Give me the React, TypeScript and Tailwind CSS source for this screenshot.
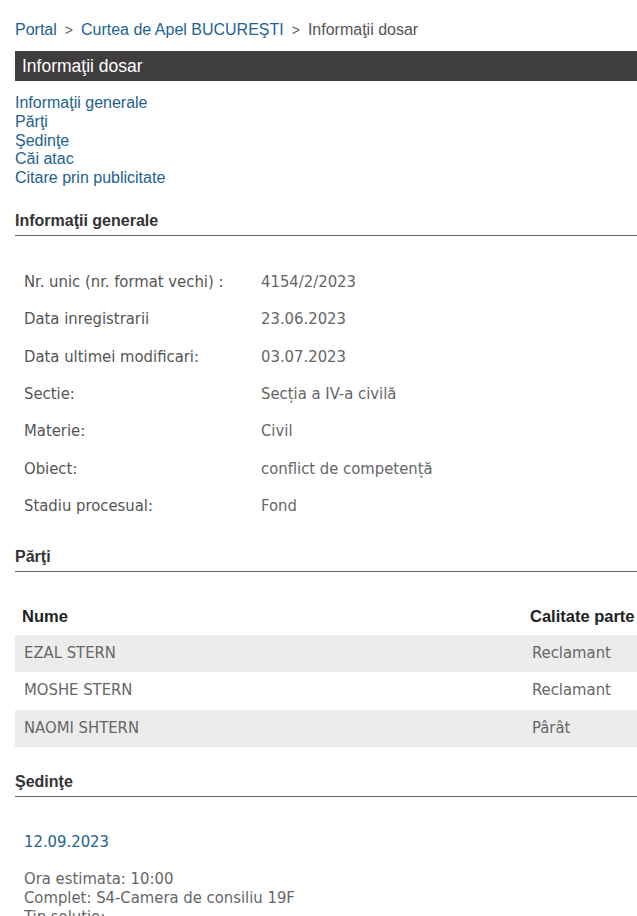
const info: [string, string][] = [
  ["Nr. unic (nr. format vechi) :", "4154/2/2023"],
  ["Data inregistrarii", "23.06.2023"],
  ["Data ultimei modificari:", "03.07.2023"],
  ["Sectie:", "Secția a IV-a civilă"],
  ["Materie:", "Civil"],
  ["Obiect:", "conflict de competență"],
  ["Stadiu procesual:", "Fond"],
];

const parti = [
  { nume: "EZAL STERN", calitate: "Reclamant" },
  { nume: "MOSHE STERN", calitate: "Reclamant" },
  { nume: "NAOMI SHTERN", calitate: "Pârât" },
];

const links = [
  "Informaţii generale",
  "Părţi",
  "Şedinţe",
  "Căi atac",
  "Citare prin publicitate",
];

const arial = "font-['Liberation_Sans',Arial,sans-serif]";
const tahoma = "font-['DejaVu_Sans_Condensed','DejaVu_Sans',sans-serif]";

function SectionTitle({ title }: { title: string }) {
  return (
    <div className={`${arial} text-[16px] font-bold text-[#333] leading-[18px] pb-[5px] border-b border-[#666]`}>
      {title}
    </div>
  );
}

export default function App() {
  return (
    <div className="w-full h-[916px] overflow-hidden bg-white">
      <div className="w-[720px] pl-[15px]">
        {/* ===== BREADCRUMB ===== */}
        <div className={`${arial} text-[16px] leading-[18px] pt-[21px] text-[#555]`}>
          <span className="text-[#23628f]">Portal</span>
          <span className="mx-[8px] text-[#666] text-[14px]">&gt;</span>
          <span className="text-[#23628f]">Curtea de Apel BUCUREŞTI</span>
          <span className="mx-[8px] text-[#666] text-[14px]">&gt;</span>
          <span>Informaţii dosar</span>
        </div>

        {/* ===== TITLE BAR ===== */}
        <div className={`${arial} mt-[12px] h-[30px] bg-[#3f3d3d] text-white text-[17.5px] leading-[30px] pl-[7px]`}>
          Informaţii dosar
        </div>

        {/* ===== LINKS ===== */}
        <div className={`${arial} mt-[13px] flex flex-col text-[16px] leading-[18.75px] text-[#23628f]`}>
          {links.map((l) => (
            <span key={l}>{l}</span>
          ))}
        </div>

        {/* ===== INFORMATII GENERALE ===== */}
        <div className="mt-[24px]">
          <SectionTitle title="Informaţii generale" />
        </div>

        <div className={`${tahoma} mt-[27px] text-[16.5px] leading-[37.4px]`}>
          {info.map(([k, v]) => (
            <div key={k} className="flex">
              <div className="w-[246px] pl-[9px] text-[#555]">{k}</div>
              <div className="text-[#666]">{v}</div>
            </div>
          ))}
        </div>

        {/* ===== PARTI ===== */}
        <div className="mt-[23px]">
          <SectionTitle title="Părţi" />
        </div>

        <div className="mt-[26px]">
          <div className={`${arial} flex h-[37px] items-center font-bold text-[16.5px] text-[#222]`}>
            <div className="w-[515px] pl-[7px]">Nume</div>
            <div>Calitate parte</div>
          </div>
          {parti.map((p, i) => (
            <div
              key={p.nume}
              className={`${tahoma} flex h-[37.5px] items-center text-[16.5px] text-[#666] ${i % 2 === 0 ? "bg-[#ececec]" : "bg-white"}`}
            >
              <div className="w-[517px] pl-[9px]">{p.nume}</div>
              <div>{p.calitate}</div>
            </div>
          ))}
        </div>

        {/* ===== SEDINTE ===== */}
        <div className="mt-[26px]">
          <SectionTitle title="Şedinţe" />
        </div>

        <div className={`${tahoma} pl-[9px] text-[16.5px]`}>
          <div className="mt-[35px] leading-[19px] text-[#23628f]">12.09.2023</div>
          <div className="mt-[18px] leading-[19px] text-[#666]">
            <div>Ora estimata: 10:00</div>
            <div>Complet: S4-Camera de consiliu 19F</div>
            <div>Tip solutie:</div>
          </div>
        </div>
      </div>
    </div>
  );
}
